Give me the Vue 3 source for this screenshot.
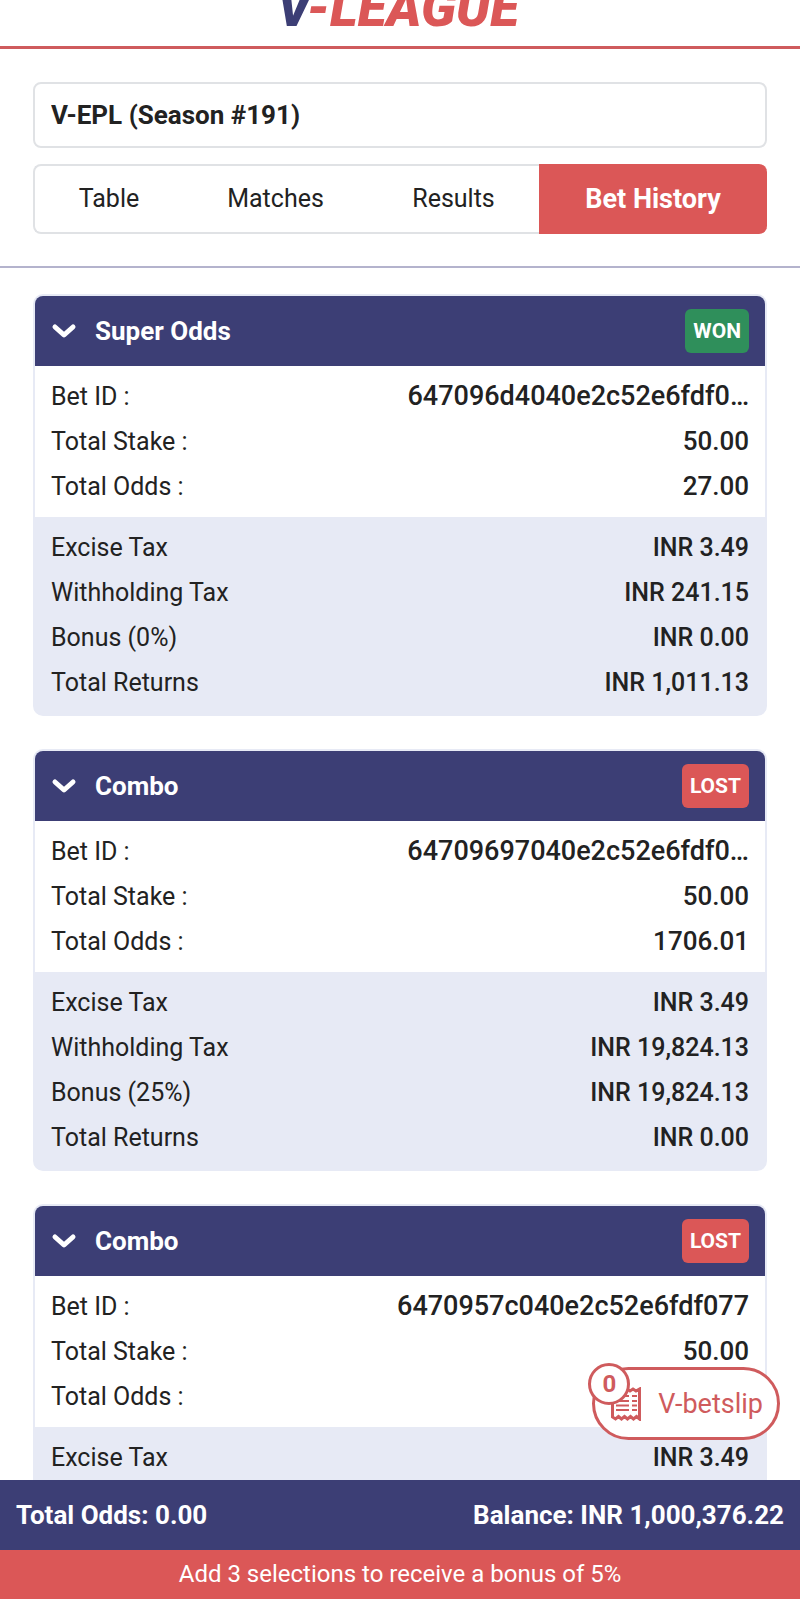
<script setup>
import { ref } from 'vue'

const season = ref('V-EPL (Season #191)')
const activeTab = ref('Bet History')
const tabs = ['Table', 'Matches', 'Results', 'Bet History']

const bets = ref([
  {
    type: 'Super Odds', status: 'WON', open: true, id: '647096d4040e2c52e6fdf0…',
    details: [['Total Stake :', '50.00'], ['Total Odds :', '27.00']],
    totals: [['Excise Tax', 'INR 3.49'], ['Withholding Tax', 'INR 241.15'], ['Bonus (0%)', 'INR 0.00'], ['Total Returns', 'INR 1,011.13']],
  },
  {
    type: 'Combo', status: 'LOST', open: true, id: '64709697040e2c52e6fdf0…',
    details: [['Total Stake :', '50.00'], ['Total Odds :', '1706.01']],
    totals: [['Excise Tax', 'INR 3.49'], ['Withholding Tax', 'INR 19,824.13'], ['Bonus (25%)', 'INR 19,824.13'], ['Total Returns', 'INR 0.00']],
  },
  {
    type: 'Combo', status: 'LOST', open: true, id: '6470957c040e2c52e6fdf077',
    details: [['Total Stake :', '50.00'], ['Total Odds :', '']],
    totals: [['Excise Tax', 'INR 3.49']],
  },
])
</script>

<template>
  <div class="app">
    <header class="brand">
      <h1 class="logo"><span class="logo-v">V</span>-LEAGUE</h1>
    </header>

    <section class="filters">
      <select v-model="season" class="season" aria-label="Season">
        <option>V-EPL (Season #191)</option>
      </select>
      <nav class="tabs">
        <button
          v-for="tab in tabs"
          :key="tab"
          type="button"
          class="tab"
          :class="{ active: tab === activeTab }"
          @click="activeTab = tab"
        >{{ tab }}</button>
      </nav>
    </section>

    <main class="history">
      <article v-for="(bet, i) in bets" :key="i" class="card">
        <button type="button" class="card-head" :aria-expanded="bet.open" @click="bet.open = !bet.open">
          <svg class="chevron" viewBox="0 0 26 18" aria-hidden="true">
            <path d="M4 5 L13 13 L22 5" />
          </svg>
          <span class="card-title">{{ bet.type }}</span>
          <span class="status" :class="bet.status.toLowerCase()">{{ bet.status }}</span>
        </button>
        <template v-if="bet.open">
          <dl class="rows details">
            <div class="row">
              <dt>Bet ID :</dt>
              <dd class="bet-id">{{ bet.id }}</dd>
            </div>
            <div v-for="row in bet.details" :key="row[0]" class="row">
              <dt>{{ row[0] }}</dt>
              <dd>{{ row[1] }}</dd>
            </div>
          </dl>
          <dl class="rows totals">
            <div v-for="row in bet.totals" :key="row[0]" class="row">
              <dt>{{ row[0] }}</dt>
              <dd>{{ row[1] }}</dd>
            </div>
          </dl>
        </template>
      </article>
    </main>

    <footer class="footer">
      <button type="button" class="betslip">
        <svg class="receipt" viewBox="0 0 32 34" aria-hidden="true">
          <path class="edge" d="M2.500 4 L5 2 L8 4 L11 2 L14 4 L17 2 L20 4 L23 2 L26 4 L29.500 2 V32 L26.500 29.500 L23.500 32 L20.500 29.500 L17.500 32 L14.500 29.500 L11.500 32 L8.500 29.500 L5.500 32 L2.500 30 Z" />
          <path class="line" d="M6 9 H19 M22 9 H27 M6 14 H19 M22 14 H27 M6 18.500 H19 M22 18.500 H27 M6 23 H19 M22 23 H27" />
        </svg>
        <span>V-betslip</span>
        <span class="count">0</span>
      </button>
      <div class="summary">
        <span>Total Odds: 0.00</span>
        <span>Balance: INR 1,000,376.22</span>
      </div>
      <p class="promo">Add 3 selections to receive a bonus of 5%</p>
    </footer>
  </div>
</template>

<style>
body {
  margin: 0;
  background: #fff;
}
</style>

<style scoped>
.app {
  --navy: #3c3e75;
  --red: #db5757;
  --lilac: #e7eaf5;
  display: flex;
  flex-direction: column;
  height: 100vh;
  overflow: hidden;
  color: #222;
  font-family: Roboto, "Liberation Sans", sans-serif;
  font-size: 25px;
  line-height: 30px;
}
button,
select {
  margin: 0;
  font: inherit;
  color: inherit;
  cursor: pointer;
}
.brand {
  flex: none;
  display: flex;
  align-items: flex-end;
  justify-content: center;
  height: 46px;
  padding-right: 4px;
  border-bottom: 3px solid #cf5b5d;
  overflow: hidden;
}
.logo {
  margin: 0 0 11px;
  color: var(--red);
  font-size: 53px;
  font-weight: 900;
  font-style: italic;
  line-height: 53px;
}
.logo-v {
  color: var(--navy);
}
.filters {
  flex: none;
  display: flex;
  flex-direction: column;
  gap: 16px;
  padding: 33px 33px 32px;
  border-bottom: 2px solid #b4b3cd;
}
.season {
  appearance: none;
  width: 100%;
  height: 66px;
  padding: 0 16px;
  border: 2px solid #e0e2e5;
  border-radius: 8px;
  background: #fff;
  font-size: 26px;
  font-weight: 700;
}
.tabs {
  display: grid;
  grid-template-columns: 150fr 185fr 171fr 228fr;
  height: 70px;
}
.tab {
  padding: 0;
  border: solid #e0e2e5;
  border-width: 2px 0;
  background: #fff;
}
.tab:first-child {
  border-left-width: 2px;
  border-radius: 8px 0 0 8px;
}
.tab.active {
  border-color: var(--red);
  border-radius: 0 8px 8px 0;
  background: var(--red);
  color: #fff;
  font-size: 27px;
  font-weight: 700;
}
.history {
  flex: 1;
  min-height: 0;
  display: flex;
  flex-direction: column;
  gap: 33px;
  padding: 26px 33px 0;
  overflow: hidden;
}
.card {
  flex: none;
  border: 2px solid var(--lilac);
  border-radius: 10px;
  background: var(--lilac);
  overflow: hidden;
}
.card-head {
  display: flex;
  align-items: center;
  gap: 18px;
  width: 100%;
  height: 70px;
  padding: 0 16px;
  border: 0;
  background: var(--navy);
  color: #fff;
  font-size: 26px;
  font-weight: 700;
  text-align: left;
}
.chevron {
  width: 26px;
  height: 18px;
  fill: none;
  stroke: #fff;
  stroke-width: 5;
  stroke-linecap: round;
  stroke-linejoin: round;
}
.card-title {
  flex: 1;
}
.status {
  padding: 7px 8px;
  border-radius: 6px;
  font-size: 21px;
}
.status.won {
  background: #2f8f5b;
}
.status.lost {
  background: var(--red);
}
.rows {
  margin: 0;
  padding: 8px 16px;
}
.details {
  background: #fff;
}
.row {
  display: flex;
  justify-content: space-between;
  line-height: 45px;
}
dd {
  margin: 0;
  font-weight: 500;
}
.details dd {
  font-size: 26px;
}
.details .bet-id {
  font-size: 27px;
}
.totals {
  padding-bottom: 9px;
}
.footer {
  position: relative;
  flex: none;
  color: #fff;
}
.betslip {
  position: absolute;
  right: 20px;
  bottom: calc(100% + 40px);
  display: flex;
  align-items: center;
  gap: 16px;
  height: 73px;
  padding: 0 14px 0 15px;
  border: 3px solid #cf5b5d;
  border-radius: 37px;
  background: #fff;
  color: #cf5b5d;
  font-size: 27px;
}
.receipt {
  width: 32px;
  height: 34px;
  fill: none;
  stroke: currentColor;
}
.edge {
  stroke-width: 3;
}
.line {
  stroke-width: 2;
}
.count {
  position: absolute;
  top: -7px;
  left: -7px;
  box-sizing: border-box;
  width: 42px;
  height: 42px;
  border: 3px solid #cf5b5d;
  border-radius: 50%;
  background: #fff;
  font-size: 24px;
  font-weight: 700;
  line-height: 36px;
}
.summary {
  display: flex;
  justify-content: space-between;
  align-items: center;
  height: 70px;
  padding: 0 16px;
  background: var(--navy);
  font-size: 26px;
  font-weight: 700;
}
.promo {
  margin: 0;
  background: var(--red);
  font-size: 24px;
  line-height: 49px;
  text-align: center;
}
</style>
